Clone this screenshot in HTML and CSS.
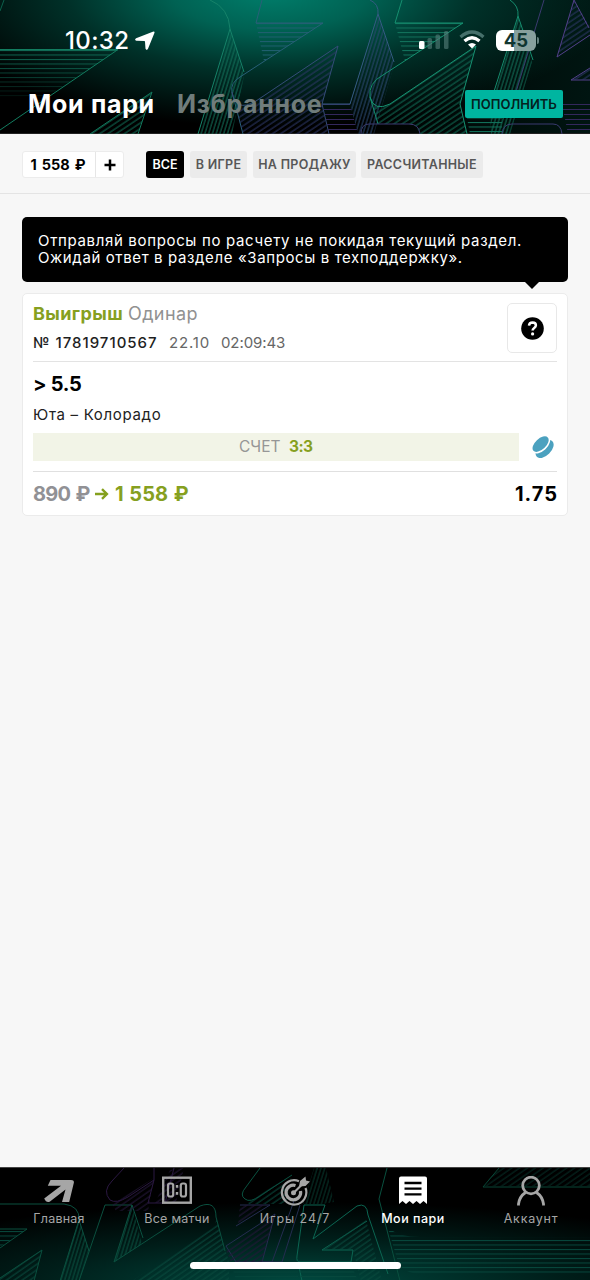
FILE: index.html
```html
<!DOCTYPE html>
<html lang="ru">
<head>
<meta charset="utf-8">
<title>Мои пари</title>
<link rel="stylesheet" href="styles.css">
</head>
<body>
<div class="app">
  <header class="header">
    <svg class="art" width="590" height="134" viewBox="0 0 590 134" fill="none" stroke-width="1">
      <defs>
        <pattern id="gh" width="8" height="4.5" y="23" patternUnits="userSpaceOnUse"><path d="M0 .5H8" stroke="#12735c"/></pattern>
        <pattern id="bh" width="8" height="4.5" y="23" patternUnits="userSpaceOnUse"><path d="M0 .5H8" stroke="#215f70"/></pattern>
        <pattern id="ph" width="8" height="5" y="104" patternUnits="userSpaceOnUse"><path d="M0 .5H8" stroke="#33285c"/></pattern>
        <pattern id="gd" width="8" height="4.6" patternUnits="userSpaceOnUse" patternTransform="rotate(-34)"><path d="M0 1H8" stroke="#0f6a54"/></pattern>
        <pattern id="pd" width="8" height="4.6" patternUnits="userSpaceOnUse" patternTransform="rotate(-34)"><path d="M0 1H8" stroke="#2c3665"/></pattern>
        <pattern id="gs" width="3.6" height="8" patternUnits="userSpaceOnUse" patternTransform="rotate(17)"><path d="M1 0V8" stroke="#127059"/></pattern>
        <pattern id="ps" width="3.6" height="8" patternUnits="userSpaceOnUse" patternTransform="rotate(17)"><path d="M1 0V8" stroke="#2a466e"/></pattern>
        <linearGradient id="fg" x1="0" x2="0" y1="0" y2="1"><stop offset="0" stop-color="#fff"/><stop offset="1" stop-color="#fff" stop-opacity=".1"/></linearGradient>
        <mask id="fade"><path d="M0 48H130V100H0Z" fill="url(#fg)"/></mask>
      </defs>
      <path d="M4 0L0 11" stroke="#0b604b"/>
      <path d="M0 50H118L45 98H0Z" fill="url(#gh)" mask="url(#fade)"/>
      <path d="M0 49.500H118L0 130" stroke="#127d60"/>
      <path d="M152 92L90 134H138Z" fill="url(#gd)"/>
      <path d="M90 134L152 92L138 134" stroke="#12775c"/>
      <path d="M230 30L244 76L232 134H198Z" fill="url(#gs)"/>
      <path d="M210 0Q229 8 230 29L198 134M230 29L244 72" stroke="#168269"/>
      <path d="M256 23H323L264 61Z" fill="url(#bh)"/>
      <path d="M262 0L256 23H323L240 77Q230 83 232 92L243 134" stroke="#286078"/>
      <path d="M338 46L322 104L328 134H243L236 109Q247 108 262 98Z" fill="url(#pd)"/>
      <path d="M232 92Q235 113 256 101L338 46L322 104L329 134" stroke="#344c78"/>
      <path d="M322 104H350L358 134H329Z" fill="url(#ph)"/>
      <path d="M378 13L394 65L374 134H358L350 104Z" fill="url(#ps)"/>
      <path d="M370 0Q379 4 378 14L350 104H322M378 14L394 62" stroke="#345b82"/>
      <path d="M395 23H463L405 61Z" fill="url(#gh)"/>
      <path d="M402 0L395 23H463L383 75Q368 83 370 97L378 124" stroke="#159070"/>
      <path d="M370 97Q375 112 390 104L476 46L460 104L467 134H419Q417 124 411 124H378Z" fill="url(#gd)"/>
      <path d="M370 97Q374 112 390 104L476 46L460 104L467 134" stroke="#169171"/>
      <path d="M518 15L532 62L510 134H491L490 104Z" fill="url(#gs)"/>
      <path d="M510 0Q519 6 518 16L490 104M518 16L533 60" stroke="#158c6e"/>
      <path d="M544 0L516 92M361 134Q361 124 369 124H409Q419 124 420 134M502 134Q503 124 512 124H553Q561 124 562 134" stroke="#3b3b70"/>
      <path d="M574 0L557 57L590 35V27Z" fill="url(#pd)"/>
      <path d="M574 0L557 57L590 35M574 0L589 28M590 68L571 80H590" stroke="#52408a"/>
      <path d="M571 80L590 68V80Z" fill="url(#pd)"/>
      <path d="M562 104H590V134H568Z" fill="url(#ph)"/>
      <path d="M467 118H502V134H470Z" fill="url(#gh)"/>
    </svg>
    <div class="status">
      <div class="clock"><span>10:32</span>
        <svg width="20" height="20" viewBox="0 0 20 20"><path d="M17.800 .8Q20.200 0 19.300 2.300L13 17.800Q11.800 20 10.500 17.800L10 10.800Q10 10.100 9.300 10.100L1.300 9.800Q-1 8.700 1.100 7.300Z" fill="#fff"/></svg>
      </div>
      <div class="indicators">
        <svg class="signal" width="31" height="20" viewBox="0 0 31 20"><rect y="11" width="5.500" height="8" rx="1.500" fill="#fff"/><g fill="#57807b" fill-opacity=".6"><rect x="8.500" y="8" width="4.500" height="11" rx="1.500"/><rect x="16.500" y="4.500" width="4.500" height="14.500" rx="1.500"/><rect x="25" y="1" width="4.500" height="18" rx="1.500"/></g></svg>
        <svg class="wifi" width="26" height="20" viewBox="0 0 26 20"><path d="M1.500 7Q13-3 24.500 7" stroke="#46706b" stroke-width="3.200" fill="none"/><path d="M5.500 11Q13 4.500 20.500 11" stroke="#fff" stroke-width="3.300" fill="none"/><path d="M9 14.500Q13 11.500 17 14.500L13 18.500Z" fill="#fff"/></svg>
        <div class="battery"><span>45</span></div><i class="battery-tip"></i>
      </div>
    </div>
    <div class="tabs">
      <span class="tab tab-on">Мои пари</span><span class="tab tab-off">Избранное</span>
      <span class="topup">ПОПОЛНИТЬ</span>
    </div>
  </header>

  <div class="filters">
    <div class="balance"><span class="sum">1 558 ₽</span><span class="plus"><svg width="12" height="12" viewBox="0 0 12 12"><path d="M6 .5V11.500M.5 6H11.500" stroke="#000" stroke-width="2.500"/></svg></span></div>
    <span class="chip chip-all">ВСЕ</span>
    <span class="chip chip-live">В ИГРЕ</span>
    <span class="chip chip-sale">НА ПРОДАЖУ</span>
    <span class="chip chip-done">РАССЧИТАННЫЕ</span>
  </div>

  <main class="content">
    <div class="tip"><p class="tip-a">Отправляй вопросы по расчету не покидая текущий раздел.</p><p class="tip-b">Ожидай ответ в разделе «Запросы в техподдержку».</p></div>
    <section class="card">
      <div class="card-head">
        <div>
          <div class="title"><b>Выигрыш</b><span>Одинар</span></div>
          <div class="meta"><span class="num">№ 17819710567</span><span class="date">22.10</span><span class="time">02:09:43</span></div>
        </div>
        <div class="help"><svg width="23" height="23" viewBox="0 0 23 23"><circle cx="11.500" cy="11.500" r="11.300"/><path d="M8 8.700Q8.200 5.500 11.600 5.500Q14.900 5.600 14.900 8.300Q14.900 9.700 13.200 10.900Q11.600 12 11.600 13.600" fill="none" stroke="#fff" stroke-width="2.500"/><circle cx="11.600" cy="16.900" r="1.600" fill="#fff"/></svg></div>
      </div>
      <div class="pick">&gt; 5.5</div>
      <div class="match">Юта – Колорадо</div>
      <div class="score-row">
        <div class="score"><span>СЧЕТ</span><b>3:3</b></div>
        <svg width="22" height="22" viewBox="0 0 22 22"><ellipse cx="12.600" cy="13" rx="11" ry="6.500" transform="rotate(-45 12.600 13)" fill="#4ba1bf"/><ellipse cx="8.900" cy="8.500" rx="11" ry="6.600" transform="rotate(-43 8.900 8.500)" fill="#fff"/><ellipse cx="8.600" cy="8.100" rx="9.800" ry="5.400" transform="rotate(-43 8.600 8.100)" fill="#4ba1bf"/></svg>
      </div>
      <div class="totals">
        <span class="stake">890 ₽</span>
        <svg width="14" height="12" viewBox="0 0 14 12"><path d="M0 6H11.500M7 1.200L11.900 6L7 10.800" fill="none" stroke="#85a01d" stroke-width="2.400"/></svg>
        <span class="win">1 558 ₽</span>
        <span class="odds">1.75</span>
      </div>
    </section>
  </main>

  <nav class="nav">
    <svg class="art" width="590" height="113" viewBox="0 0 590 113" fill="none" stroke-width="1">
      <defs>
        <pattern id="nh" width="8" height="4.500" y="0" patternUnits="userSpaceOnUse"><path d="M0 .5H8" stroke="#07483d"/></pattern>
        <pattern id="nd" width="8" height="4.500" patternUnits="userSpaceOnUse" patternTransform="rotate(-35)"><path d="M0 1H8" stroke="#08493d"/></pattern>
        <pattern id="np" width="8" height="4.500" patternUnits="userSpaceOnUse" patternTransform="rotate(-35)"><path d="M0 1H8" stroke="#241639"/></pattern>
        <pattern id="ns" width="3.600" height="8" patternUnits="userSpaceOnUse" patternTransform="rotate(17)"><path d="M1 0V8" stroke="#09503f"/></pattern>
      </defs>
      <path d="M0 61H27L0 79Z" fill="url(#nh)"/>
      <path d="M42 82L0 110V113H34Z" fill="url(#nd)"/>
      <path d="M79 51L89 82L79 113H60Z" fill="url(#ns)"/>
      <path d="M0 36H64Q80 38 79 52L60 113M79 52L89 83M0 61H27L0 80M42 82L0 110M42 82L34 113M79 113L105 37H132L114 94L200 38Q216 32 216 49L225 83M132 37L143 70" stroke="#0a503f"/>
      <path d="M132 37L142 76L114 94Z" fill="url(#ns)"/>
      <path d="M132 113L212 60Q217 55 216 49L229 94V113Z" fill="url(#nd)"/>
      <path d="M124 0L112 13Q102 23 110 32Q116 36 128 29L154 12V0M154 12L148 35H165M174 0L165 35" stroke="#2b1842"/>
      <path d="M112 36L154 10L148 43H116Z" fill="url(#np)"/>
      <path d="M170 2L184 0L176 35H155Z" fill="url(#np)"/>
      <path d="M260 0L246 19Q239 27 245 31Q250 35 260 28L292 7" stroke="#095240"/>
      <path d="M247 34L292 7L286 36H249Z" fill="url(#nd)"/>
      <path d="M314 0H326L334 34L322 36H303Z" fill="url(#ns)" opacity=".7"/>
      <path d="M240 37H270L236 58M226 78L275 46L262 94H272L295 30M226 78L236 94H262M300 37L282 94H262" stroke="#242c50"/>
      <path d="M226 82L275 46L262 94H231Z" fill="url(#np)"/>
      <path d="M240 37H268L238 57Z" fill="url(#np)"/>
      <path d="M231 94H298V113H236Z" fill="url(#nh)" opacity=".6"/>
      <path d="M325 37H304L297 88Q296 94 300 94H351L353 82H322L367 53M325 37L313 71L357 38Q367 34 368 47L388 106M298 94L302 113" stroke="#0b6652"/>
      <path d="M322 82L366 52L382 113H361L353 82Z" fill="url(#nd)"/>
      <path d="M298 96H351L358 113H302Z" fill="url(#nh)"/>
      <path d="M387 0L379 31L400 113" stroke="#09503f"/>
      <path d="M388 60Q400 69 420 69H590V107H430Q403 107 398 94Z" fill="url(#nh)"/>
      <path d="M499 0L483 19H590" stroke="#084636"/>
      <path d="M499 0H590V18H483Z" fill="url(#nd)" opacity=".6"/>
    </svg>
    <div class="nav-items">
      <div class="item"><svg width="30" height="28" viewBox="0 0 30 28" fill="#a6a6a6"><path d="M6.500 4H27Q30.500 4 29.800 7L25.200 26H18L21.500 13.500L6 25.500Q2.500 27.500 .2 22.500L17 9.800H3.800Z"/></svg><span class="l1">Главная</span></div>
      <div class="item"><svg width="30" height="28" viewBox="0 0 30 28" fill="none" stroke="#a6a6a6"><rect x="1.200" y="1.700" width="27.600" height="25" stroke-width="2.400"/><rect x="6" y="7.500" width="5.200" height="13" rx="2" stroke-width="2.200"/><rect x="18.800" y="7.500" width="5.200" height="13" rx="2" stroke-width="2.200"/><path d="M15 9V11.800M15 16V18.800" stroke-width="2.400"/></svg><span class="l2">Все матчи</span></div>
      <div class="item"><svg width="30" height="30" viewBox="0 0 30 30" fill="none" stroke="#a6a6a6"><path d="M19 5.200A12.200 12.200 0 1 0 25.500 12" stroke-width="2.200"/><path d="M15.500 9.500A7.300 7.300 0 1 0 20.500 15" stroke-width="3.200"/><circle cx="13.500" cy="16.800" r="2.500" fill="#a6a6a6" stroke="none"/><path d="M13.500 17L23 7.500" stroke-width="2.200"/><path d="M19 10.500L20 5L25.500 .5L26 4.500L30 5.500L25.500 10Z" fill="#a6a6a6" stroke="none"/></svg><span class="l3">Игры 24/7</span></div>
      <div class="item item-on"><svg width="28" height="28" viewBox="0 0 28 28"><path d="M2 .5H26Q28 .5 28 2.500V28L24.500 25L21 28L17.500 25L14 28L10.500 25L7 28L3.500 25L0 28V2.500Q0 .5 2 .5Z" fill="#fff"/><path d="M5.500 7H22.500M5.500 12.700H22.500M5.500 18.400H22.500" stroke="#000" stroke-width="2.300"/></svg><span class="l4">Мои пари</span></div>
      <div class="item"><svg width="30" height="30" viewBox="0 0 30 30" fill="none" stroke="#a6a6a6" stroke-width="2.800"><circle cx="15" cy="9.500" r="8.300"/><path d="M2.500 29.500V28Q3.500 20.500 9.500 16.500M27.500 29.500V28Q26.500 20.500 20.500 16.500"/></svg><span class="l5">Аккаунт</span></div>
    </div>
    <div class="home"></div>
  </nav>
</div>
</body>
</html>
```
FILE: styles.css
```css
* { box-sizing: border-box; }
body { margin: 0; background: #f7f7f7; font-family: Inter, "Noto Sans", sans-serif; color: #000; }
svg { display: block; flex: none; }
p { margin: 0; }
.app { width: 590px; height: 1280px; display: flex; flex-direction: column; overflow: hidden; white-space: nowrap; }

.header { position: relative; height: 134px; border-bottom: 1px solid #222; background: radial-gradient(ellipse 350px 135px at 270px -8px, #007e6b 0%, #006253 28%, rgba(0, 54, 45, .9) 58%, rgba(0, 0, 0, 0) 100%), linear-gradient(90deg, #000, #000 60%, #001511), #000; }
.art { position: absolute; left: 0; top: 0; }
.status { position: relative; display: flex; justify-content: space-between; height: 80px; padding: 28px 51px 0 65px; }
.clock { display: flex; gap: 6px; height: 25px; align-items: center; color: #fff; font-size: 24px; font-weight: 500; line-height: 25px; }
.clock span { width: 64px; letter-spacing: .35px; }
.indicators { display: flex; height: 24px; align-items: center; }
.wifi { margin: 0 11px 0 9px; }
.battery { width: 40px; height: 21px; border-radius: 6px; background: linear-gradient(90deg, #fff 45%, #87a09d 45%); color: #113630; text-align: center; font-size: 18.500px; font-weight: 700; line-height: 21px; }
.battery-tip { width: 2px; height: 7px; margin-left: 1px; border-radius: 0 2px 2px 0; background: #65817e; }
.tabs { position: relative; display: flex; align-items: center; height: 48px; padding: 0 27px 0 28px; }
.tab { font-size: 25px; font-weight: 700; line-height: 30px; letter-spacing: .7px; }
.tab-on { width: 149px; color: #fff; }
.tab-off { color: #707d7b; }
.topup { width: 98px; height: 28px; margin-left: auto; border-radius: 2px; background: #00b5a0; color: #04211e; text-align: center; font-size: 13px; font-weight: 600; line-height: 28px; }

.filters { display: flex; height: 60px; padding: 17px 22px 0; border-bottom: 1px solid #e4e4e4; }
.balance { display: flex; width: 102px; height: 27px; margin-right: 22px; border: 1px solid #ececec; border-radius: 3px; background: #fff; }
.sum { width: 73px; padding-right: 2px; border-right: 1px solid #e6e6e6; text-align: center; font-size: 14.500px; font-weight: 700; line-height: 25px; word-spacing: 1.500px; }
.plus { display: flex; flex: 1; align-items: center; justify-content: center; }
.chip { height: 27px; margin-right: 6px; border-radius: 3px; background: #ebebeb; color: #575757; text-align: center; font-size: 12.500px; font-weight: 600; line-height: 27px; letter-spacing: .3px; }
.chip-all { width: 38px; background: #000; color: #fff; letter-spacing: 0; }
.chip-live { width: 57px; }
.chip-sale { width: 103px; margin-right: 5px; }
.chip-done { width: 122px; }

.content { flex: 1; padding: 23px 22px 0; }
.tip { position: relative; height: 65px; padding: 16px 16px 0; border-radius: 5px; background: #000; color: #fff; font-size: 15px; line-height: 16.500px; letter-spacing: .66px; }
.tip-b { letter-spacing: .62px; }
.tip::after { content: ""; position: absolute; left: 503px; top: 65px; border: 7px solid transparent; border-top-color: #000; border-bottom: 0; }
.card { height: 223px; margin-top: 11px; padding: 9px 10px 0; border: 1px solid #ebebeb; border-radius: 5px; background: #fff; }
.card-head { display: flex; justify-content: space-between; height: 59px; border-bottom: 1px solid #e3e3e3; }
.title { display: flex; gap: 6px; font-size: 18px; line-height: 21px; letter-spacing: .4px; }
.title b { width: 89px; color: #86a01f; }
.title span { color: #919191; }
.meta { display: flex; margin-top: 9px; font-size: 15px; line-height: 19px; color: #666; }
.num { width: 136px; color: #1e1e1e; font-weight: 500; letter-spacing: 1px; }
.date { width: 52px; letter-spacing: .85px; }
.time { letter-spacing: -.1px; }
.help { display: flex; width: 50px; height: 50px; align-items: center; justify-content: center; border: 1px solid #e8e8e8; border-radius: 5px; }
.pick { margin-top: 10px; font-size: 20px; font-weight: 700; line-height: 24px; letter-spacing: -.3px; }
.match { margin-top: 9px; color: #222; font-size: 15px; line-height: 20px; letter-spacing: .68px; }
.score-row { display: flex; align-items: center; justify-content: space-between; height: 39px; margin-top: 8px; padding: 0 3px 10px 0; border-bottom: 1px solid #e0e0e0; }
.score { display: flex; width: 486px; height: 28px; padding-left: 206px; background: #f2f4e7; font-size: 15.500px; line-height: 28px; }
.score span { width: 50px; color: #969696; }
.score b { color: #86a01f; letter-spacing: -.6px; }
.totals { display: flex; align-items: center; height: 44px; font-size: 20px; font-weight: 700; }
.stake { width: 62px; color: #919195; letter-spacing: -.7px; word-spacing: 1px; }
.win { margin-left: 6px; color: #86a01f; word-spacing: 1px; }
.odds { margin-left: auto; letter-spacing: 1px; margin-right: -1px; }

.nav { position: relative; height: 113px; border-top: 1px solid #444; background: radial-gradient(ellipse 480px 82px at 300px 116px, #004a40, rgba(0, 42, 36, .7) 55%, rgba(0, 0, 0, 0) 100%), #000; }
.nav-items { position: relative; display: grid; grid-template-columns: repeat(5, 118px); height: 98px; padding-top: 8px; }
.item { display: grid; grid-template-rows: 31px 22px; justify-items: center; color: #a6a6a6; font-size: 12.500px; line-height: 23px; letter-spacing: .25px; align-content: start; }
.item-on { color: #fff; font-weight: 500; }
.l3 { letter-spacing: .9px; }
.l4 { letter-spacing: .5px; }
.l5 { letter-spacing: .75px; }
.home { position: relative; width: 211px; height: 7px; margin: -4px auto 0; border-radius: 4px; background: #fff; }
```
